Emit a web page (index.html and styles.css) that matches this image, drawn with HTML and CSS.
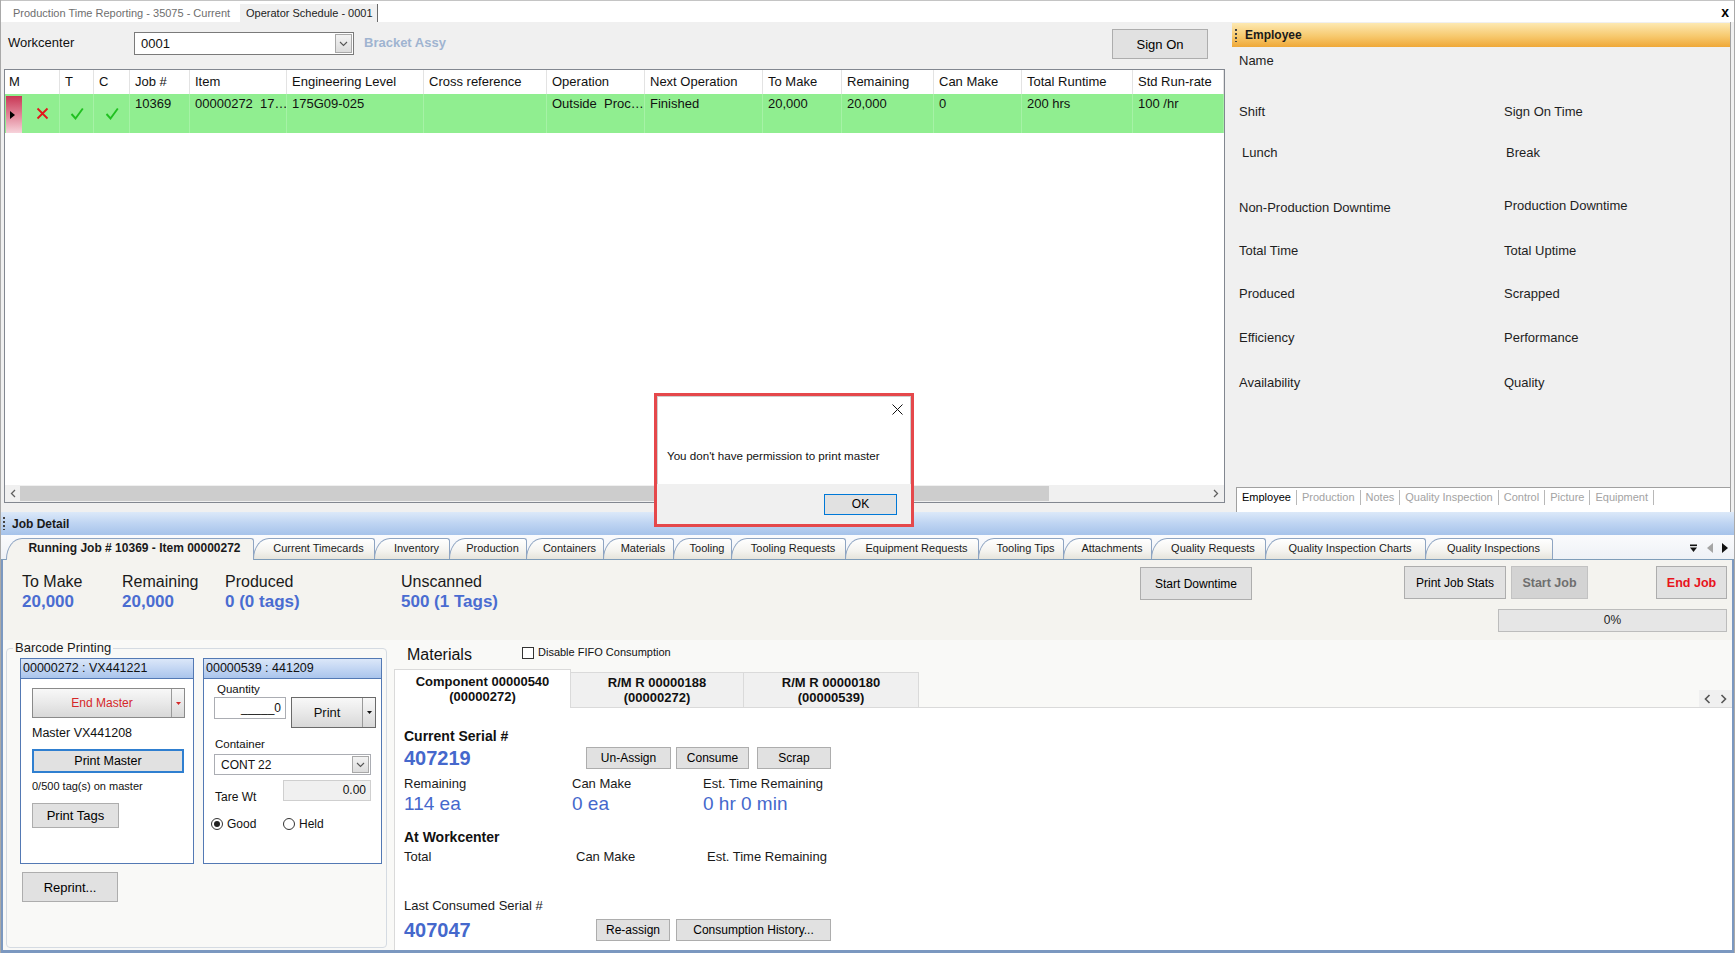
FILE: index.html
```html
<!DOCTYPE html>
<html lang="en">
<head>
<meta charset="utf-8">
<title>Operator Schedule - 0001</title>
<link rel="stylesheet" href="styles.css">
</head>
<body>
<div class="app">
  <div class="doc-tabs">
    <div class="doc-tab">Production Time Reporting - 35075 - Current</div>
    <div class="doc-tab doc-tab-active">Operator Schedule - 0001</div>
    <div class="doc-close">x</div>
  </div>

  <div class="main">
    <div class="left-pane">
      <div class="wc-row">
        <span class="wc-label">Workcenter</span>
        <div class="combo wc-combo">
          <span class="combo-text">0001</span>
          <span class="combo-btn"><svg width="9" height="6" viewBox="0 0 9 6"><path d="M1 1l3.5 3.5L8 1" fill="none" stroke="#555" stroke-width="1.1"/></svg></span>
        </div>
        <span class="wc-desc">Bracket Assy</span>
        <button class="btn btn-signon">Sign On</button>
      </div>
      <div class="grid">
        <div class="cols grid-head">
          <div class="gh">M</div><div class="gh">T</div><div class="gh">C</div><div class="gh">Job #</div><div class="gh">Item</div><div class="gh">Engineering Level</div><div class="gh">Cross reference</div><div class="gh">Operation</div><div class="gh">Next Operation</div><div class="gh">To Make</div><div class="gh">Remaining</div><div class="gh">Can Make</div><div class="gh">Total Runtime</div><div class="gh">Std Run-rate</div>
        </div>
        <div class="cols grid-row">
          <div class="gc gc-m">
            <span class="row-ind"><svg width="5" height="8" viewBox="0 0 5 8"><path d="M0 0L5 4L0 8z" fill="#000"/></svg></span>
            <svg class="ico-x" width="13" height="13" viewBox="0 0 13 13"><path d="M1.5 1.5l10 10M11.5 1.5l-10 10" stroke="#e3151a" stroke-width="1.8"/></svg>
          </div>
          <div class="gc gc-icon"><svg width="14" height="13" viewBox="0 0 14 13"><path d="M1.5 7l4 4.5L12.8 1.5" fill="none" stroke="#21c021" stroke-width="1.9"/></svg></div>
          <div class="gc gc-icon"><svg width="14" height="13" viewBox="0 0 14 13"><path d="M1.5 7l4 4.5L12.8 1.5" fill="none" stroke="#21c021" stroke-width="1.9"/></svg></div>
          <div class="gc">10369</div>
          <div class="gc">00000272&nbsp; 17…</div>
          <div class="gc">175G09-025</div>
          <div class="gc"></div>
          <div class="gc">Outside&nbsp; Proc…</div>
          <div class="gc">Finished</div>
          <div class="gc">20,000</div>
          <div class="gc">20,000</div>
          <div class="gc">0</div>
          <div class="gc">200 hrs</div>
          <div class="gc">100 /hr</div>
        </div>
        <div class="grid-fill"></div>
        <div class="hscroll">
          <div class="hs-arrow"><svg width="6" height="9" viewBox="0 0 6 9"><path d="M5 1L1.5 4.5L5 8" fill="none" stroke="#606060" stroke-width="1.3"/></svg></div>
          <div class="hs-track"><div class="hs-thumb"></div></div>
          <div class="hs-arrow hs-arrow-r"><svg width="6" height="9" viewBox="0 0 6 9"><path d="M1 1l3.5 3.5L1 8" fill="none" stroke="#606060" stroke-width="1.3"/></svg></div>
        </div>
      </div>
    </div>
    <div class="splitter"></div>
    <div class="emp-panel">
      <div class="emp-header"><span class="grip"></span><span>Employee</span></div>
      <div class="emp-body">
        <div class="ef">Name</div><div class="ef"></div>
        <div class="ef">Shift</div><div class="ef">Sign On Time</div>
        <div class="ef ef-in">Lunch</div><div class="ef ef-in2">Break</div>
        <div class="ef">Non-Production Downtime</div><div class="ef ef-up">Production Downtime</div>
        <div class="ef">Total Time</div><div class="ef">Total Uptime</div>
        <div class="ef">Produced</div><div class="ef">Scrapped</div>
        <div class="ef">Efficiency</div><div class="ef">Performance</div>
        <div class="ef">Availability</div><div class="ef">Quality</div>
      </div>
      <div class="emp-tabs">
        <span class="et et-active">Employee</span><span class="et">Production</span><span class="et">Notes</span><span class="et">Quality Inspection</span><span class="et">Control</span><span class="et">Picture</span><span class="et">Equipment</span>
      </div>
    </div>
  </div>

  <div class="jd-bar"><span class="grip"></span><span>Job Detail</span></div>
  <div class="jd-tabs">
    <div class="jd-tablist">
      <div class="jt jt-active">Running Job # 10369 - Item 00000272</div>
      <div class="jt">Current Timecards</div>
      <div class="jt">Inventory</div>
      <div class="jt">Production</div>
      <div class="jt">Containers</div>
      <div class="jt">Materials</div>
      <div class="jt">Tooling</div>
      <div class="jt">Tooling Requests</div>
      <div class="jt">Equipment Requests</div>
      <div class="jt">Tooling Tips</div>
      <div class="jt">Attachments</div>
      <div class="jt">Quality Requests</div>
      <div class="jt">Quality Inspection Charts</div>
      <div class="jt">Quality Inspections</div>
    </div>
    <div class="jt-ctrl">
      <svg width="9" height="9" viewBox="0 0 9 9"><rect x="1" y="0.5" width="7" height="1.6" fill="#111"/><path d="M1 3.5h7L4.5 8z" fill="#111"/></svg>
      <svg width="6" height="10" viewBox="0 0 6 10"><path d="M6 0v10L0 5z" fill="#a5a5a5"/></svg>
      <svg width="6" height="10" viewBox="0 0 6 10"><path d="M0 0v10L6 5z" fill="#111"/></svg>
    </div>
  </div>

  <div class="jd-page">
    <div class="stats-area">
      <div class="stats">
        <div class="stat"><div class="stat-l">To Make</div><div class="stat-v">20,000</div></div>
        <div class="stat"><div class="stat-l">Remaining</div><div class="stat-v">20,000</div></div>
        <div class="stat"><div class="stat-l">Produced</div><div class="stat-v">0 (0 tags)</div></div>
        <div class="stat"><div class="stat-l">Unscanned</div><div class="stat-v">500 (1 Tags)</div></div>
      </div>
      <div class="stats-mid"><button class="btn btn-big btn-downtime">Start Downtime</button></div>
      <div></div>
      <div class="stats-right">
        <div class="sr-buttons">
          <button class="btn btn-big btn-pjs">Print Job Stats</button>
          <button class="btn btn-big btn-start">Start Job</button>
          <button class="btn btn-big btn-end">End Job</button>
        </div>
        <div class="progress">0%</div>
      </div>
    </div>

    <div class="lower">
      <fieldset class="barcode">
        <legend>Barcode Printing</legend>
        <div class="bc-panels">
          <div class="bc-panel bc-p1">
            <div class="bc-head">00000272 : VX441221</div>
            <div class="bc-body">
              <div class="split split-end">
                <span class="split-main">End Master</span>
                <span class="split-drop"><svg width="5" height="3" viewBox="0 0 5 3"><path d="M0 0h5L2.5 3z" fill="#d52727"/></svg></span>
              </div>
              <div class="bc-master">Master VX441208</div>
              <button class="btn btn-pm">Print Master</button>
              <div class="bc-small">0/500 tag(s) on master</div>
              <button class="btn btn-pt">Print Tags</button>
            </div>
          </div>
          <div class="bc-panel bc-p2">
            <div class="bc-head">00000539 : 441209</div>
            <div class="bc-body bc-body2">
              <div class="f-label">Quantity</div>
              <div class="qty-row">
                <div class="inp inp-qty">_____0</div>
                <div class="split split-print">
                  <span class="split-main">Print</span>
                  <span class="split-drop"><svg width="5" height="3" viewBox="0 0 5 3"><path d="M0 0h5L2.5 3z" fill="#111"/></svg></span>
                </div>
              </div>
              <div class="f-label f-container">Container</div>
              <div class="combo cont-combo">
                <span class="combo-text">CONT 22</span>
                <span class="combo-btn"><svg width="9" height="6" viewBox="0 0 9 6"><path d="M1 1l3.5 3.5L8 1" fill="none" stroke="#555" stroke-width="1.1"/></svg></span>
              </div>
              <div class="tare-row">
                <span class="f-label f-tare">Tare Wt</span>
                <div class="inp inp-tare">0.00</div>
              </div>
              <div class="radio-row">
                <span class="ropt"><span class="radio radio-on"></span>Good</span>
                <span class="ropt"><span class="radio"></span>Held</span>
              </div>
            </div>
          </div>
        </div>
        <button class="btn btn-reprint">Reprint...</button>
      </fieldset>

      <div class="materials">
        <div class="mat-head">
          <span class="mat-title">Materials</span>
          <span class="chk"></span>
          <span class="chk-label">Disable FIFO Consumption</span>
        </div>
        <div class="mat-tabs">
          <div class="mt mt-active mt1">Component 00000540<br>(00000272)</div>
          <div class="mt mt2">R/M R 00000188<br>(00000272)</div>
          <div class="mt mt3">R/M R 00000180<br>(00000539)</div>
          <div class="mt-fill"></div>
          <div class="mt-arrows">
            <svg width="7" height="10" viewBox="0 0 7 10"><path d="M5.5 1L1.5 5l4 4" fill="none" stroke="#555" stroke-width="1.6"/></svg>
            <svg width="7" height="10" viewBox="0 0 7 10"><path d="M1.5 1l4 4-4 4" fill="none" stroke="#555" stroke-width="1.6"/></svg>
          </div>
        </div>
        <div class="mat-page">
          <div class="mp-title">Current Serial #</div>
          <div class="mp-row-btns">
            <div class="mp-serial">407219</div>
            <button class="btn btn-sm btn-unassign">Un-Assign</button>
            <button class="btn btn-sm btn-consume">Consume</button>
            <button class="btn btn-sm btn-scrap">Scrap</button>
          </div>
          <div class="mp-three">
            <div><div class="mp-l">Remaining</div><div class="mp-v">114 ea</div></div>
            <div><div class="mp-l">Can Make</div><div class="mp-v">0 ea</div></div>
            <div><div class="mp-l">Est. Time Remaining</div><div class="mp-v">0 hr 0 min</div></div>
          </div>
          <div class="mp-title mp-title2">At Workcenter</div>
          <div class="mp-three2">
            <div class="mp-l">Total</div><div class="mp-l">Can Make</div><div class="mp-l">Est. Time Remaining</div>
          </div>
          <div class="mp-l mp-last">Last Consumed Serial #</div>
          <div class="mp-row-btns mp-row-last">
            <div class="mp-serial mp-serial2">407047</div>
            <button class="btn btn-sm btn-reassign">Re-assign</button>
            <button class="btn btn-sm btn-history">Consumption History...</button>
          </div>
        </div>
      </div>
    </div>
  </div>
</div>

<div class="dialog">
  <div class="dlg-main">
    <div class="dlg-close"><svg width="11" height="11" viewBox="0 0 11 11"><path d="M0.5 0.5l10 10M10.5 0.5l-10 10" stroke="#111" stroke-width="1"/></svg></div>
    <div class="dlg-msg">You don't have permission to print master</div>
  </div>
  <div class="dlg-foot"><button class="dlg-ok">OK</button></div>
</div>
</body>
</html>
```

FILE: styles.css
```css
* { box-sizing: border-box; }
html, body { margin: 0; padding: 0; }
body {
  width: 1735px; height: 953px; overflow: hidden; position: relative;
  background: #f0f0f0; color: #111;
  font-family: "Liberation Sans", Arial, Helvetica, sans-serif; font-size: 13px;
}
button { font-family: inherit; margin: 0; padding: 0; }
svg { display: block; flex: none; }

.app {
  width: 1735px; height: 953px; display: flex; flex-direction: column;
  border-left: 1px solid #a9a9a9; border-right: 1px solid #a9a9a9;
}

/* document tabs */
.doc-tabs {
  height: 22px; flex: none; display: flex; align-items: flex-end;
  background: #fff; border-top: 1px solid #c4c4c4; font-size: 11px;
}
.doc-tab { width: 239px; height: 18px; line-height: 18px; padding-left: 12px; color: #6e6e6e; white-space: nowrap; }
.doc-tab-active { width: 138px; padding-left: 6px; background: #f0f0f0; color: #1c1c1c; border-right: 1px solid #6a6a6a; }
.doc-close { margin-left: auto; align-self: center; font-weight: bold; font-size: 14px; line-height: 14px; padding-right: 5px; color: #000; }

/* main top area */
.main { height: 490px; flex: none; display: flex; }
.left-pane { width: 1225px; padding: 0 1px 0 3px; display: flex; flex-direction: column; }
.wc-row { height: 47px; flex: none; display: flex; align-items: center; padding-left: 4px; }
.wc-label { width: 126px; margin-top: -7px; }
.combo { display: flex; align-items: center; background: #fff; border: 1px solid #7a7a7a; }
.combo-text { flex: 1; }
.combo-btn {
  width: 17px; height: 19px; margin-right: 1px; display: flex; align-items: center; justify-content: center;
  background: linear-gradient(#f3f3f3, #dcdcdc); border: 1px solid #a8a8a8;
}
.wc-combo { width: 220px; height: 23px; margin-top: -4px; padding-left: 6px; }
.wc-desc { margin-left: 10px; margin-top: -7px; font-weight: bold; color: #9fb4d0; }
.btn { background: #e1e1e1; border: 1px solid #adadad; color: #000; font-size: 12px; }
.btn-signon { margin-left: auto; margin-right: 17px; margin-top: -3px; width: 96px; height: 30px; font-size: 13px; }

.grid { height: 434px; flex: none; border: 1px solid #828790; background: #fff; display: flex; flex-direction: column; }
.cols { display: grid; grid-template-columns: 55px 34px 36px 60px 97px 137px 123px 98px 118px 79px 92px 88px 111px 1fr; }
.grid-head { height: 24px; flex: none; }
.gh { border-right: 1px solid #e3e3e3; line-height: 24px; padding-left: 5px; white-space: nowrap; overflow: hidden; }
.gh:first-child { padding-left: 4px; }
.grid-row { height: 39px; flex: none; background: #90ee90; }
.gc { border-right: 1px solid #a6f2a6; padding: 2px 0 0 5px; line-height: 15px; white-space: nowrap; overflow: hidden; }
.gc-m { display: flex; align-items: center; padding: 0; }
.row-ind {
  width: 16px; align-self: stretch; margin: 2px 0 0 1px; padding-left: 4px;
  display: flex; align-items: center;
  background: linear-gradient(#c93755, #e38a9d 55%, #f7d3db);
}
.ico-x { margin-left: 14px; }
.gc-icon { display: flex; align-items: center; justify-content: center; padding: 0; }
.grid-fill { flex: 1; }
.hscroll { height: 17px; flex: none; display: flex; background: #f0f0f0; }
.hs-arrow { width: 15px; display: flex; align-items: center; justify-content: center; }
.hs-arrow-r { width: 17px; }
.hs-track { flex: 1; display: flex; padding: 1px 0; }
.hs-thumb { width: 1029px; background: #cdcdcd; }

.splitter { width: 6px; flex: none; }
.emp-panel {
  width: 499px; flex: none; margin-right: 3px; padding-top: 1px;
  border-right: 1px solid #a0a0a0; display: flex; flex-direction: column;
}
.grip {
  width: 2px; height: 13px; flex: none;
  background: repeating-linear-gradient(to bottom, #444 0 2px, transparent 2px 4px);
}
.emp-header {
  height: 24px; flex: none; display: flex; align-items: center; gap: 8px; padding-left: 3px;
  background: linear-gradient(#fde9b2, #f7c96e 55%, #efa838);
  font-weight: bold; font-size: 12px; color: #1a1a1a;
}
.emp-body {
  flex: 1; display: grid; grid-template-columns: 265px 1fr;
  grid-template-rows: 51px 41px 55px 43px 43px 44px 45px 15px; align-content: start;
  padding: 6px 0 0 7px; line-height: 15px; color: #1e1e1e;
}
.ef { white-space: nowrap; }
.ef-in { padding-left: 3px; }
.ef-in2 { padding-left: 2px; }
.ef-up { margin-top: -2px; }
.emp-tabs {
  height: 25px; flex: none; margin-left: 4px; padding-top: 2px;
  background: #fff; border-top: 1px solid #a0a0a0; border-left: 1px solid #a0a0a0;
  display: flex; align-items: flex-start; font-size: 11px;
}
.et { padding: 0 5px; line-height: 15px; border-right: 1px solid #b8b8b8; color: #a3a3a3; white-space: nowrap; }
.et-active { color: #000; }

/* job detail */
.jd-bar {
  height: 23px; flex: none; display: flex; align-items: center; gap: 7px; padding-left: 2px;
  background: linear-gradient(#dce9f9, #bed4f2 50%, #a6c3ea);
  font-weight: bold; font-size: 12px; color: #1a1a1a;
}
.jd-tabs {
  height: 25px; flex: none; display: flex; align-items: flex-end; padding-left: 5px;
  background: linear-gradient(#fafbfd, #eef1f6); border-bottom: 1px solid #7f9db9;
}
.jd-tablist {
  display: grid; align-items: end;
  grid-template-columns: 247px 121px 75px 77px 77px 70px 58px 114px 133px 85px 88px 114px 160px 127px;
}
.jt {
  height: 21px; border: 1px solid #8ea4c2; border-bottom: none;
  border-top-left-radius: 16px 21px; border-top-right-radius: 3px;
  background: linear-gradient(#ffffff, #f4f3ef 60%, #e6e4dc);
  font-size: 11px; line-height: 19px; text-align: center; padding-left: 9px;
  white-space: nowrap; color: #1a1a1a; margin-right: -1px;
}
.jt-active { height: 22px; margin-bottom: -1px; background: #f4f3ef; font-weight: bold; font-size: 12px; }
.jt-ctrl { margin-left: auto; height: 22px; display: flex; align-items: center; gap: 9px; padding-right: 6px; }

.jd-page {
  flex: 1; display: flex; flex-direction: column;
  border: 2px solid #7b98c0; border-top: none; border-bottom-width: 3px;
  background: #f9f9f7;
}
.stats-area {
  height: 80px; flex: none; display: grid; grid-template-columns: 1118px 112px 152px 323px;
  padding-left: 19px; background: #f4f3ef;
}
.stats { display: grid; grid-template-columns: 100px 103px 176px auto; align-content: start; padding-top: 13px; }
.stat-l { font-size: 16px; line-height: 18px; color: #1a1a1a; white-space: nowrap; }
.stat-v { font-size: 17px; line-height: 20px; margin-top: 1px; font-weight: bold; color: #4a6cd1; white-space: nowrap; }
.btn-big { height: 33px; }
.btn-downtime { width: 112px; margin-top: 7px; }
.stats-right { display: flex; flex-direction: column; align-items: flex-end; padding-top: 6px; }
.sr-buttons { display: flex; width: 100%; }
.btn-pjs { width: 102px; }
.btn-start { width: 77px; margin-left: 5px; background: #d3d3d3; border-color: #c2c2c2; color: #6f6f6f; font-weight: bold; font-size: 12.5px; }
.btn-end { width: 71px; margin-left: auto; color: #e8141c; font-weight: bold; font-size: 12.5px; }
.progress {
  width: 229px; height: 23px; margin-top: 10px; border: 1px solid #bcbcbc; background: #e6e6e6;
  font-size: 12px; line-height: 21px; text-align: center; color: #222;
}

.lower { flex: 1; display: flex; padding-left: 3px; background: #f9f9f7; }
.barcode {
  width: 381px; height: 308px; flex: none; margin: 0; padding: 2px 4px 0 13px;
  border: 1px solid #d5dbe2; border-radius: 4px;
}
.barcode legend { margin-left: -7px; padding: 0 2px; font-size: 13px; line-height: 16px; color: #1a1a1a; }
.bc-panels { display: flex; gap: 9px; }
.bc-panel { height: 206px; border: 1px solid #5379b4; background: #fff; display: flex; flex-direction: column; }
.bc-p1 { width: 174px; }
.bc-p2 { width: 179px; }
.bc-head {
  height: 20px; flex: none; padding-left: 2px; border-bottom: 1px solid #5379b4;
  background: linear-gradient(#dbe7f9, #c3d6f3 50%, #aac5ec);
  font-size: 12.5px; line-height: 19px; color: #111; white-space: nowrap;
}
.bc-body { flex: 1; padding: 9px 0 0 11px; display: flex; flex-direction: column; align-items: flex-start; }
.split { display: flex; border: 1px solid #8a8a8a; background: linear-gradient(#f8f8f8, #e9e9e9 50%, #d8d8d8); }
.split-main { flex: 1; display: flex; align-items: center; justify-content: center; border-right: 1px solid #9a9a9a; }
.split-drop { width: 12px; display: flex; align-items: center; justify-content: center; }
.split-end { width: 153px; height: 30px; }
.split-end .split-main { color: #d52727; font-size: 12px; }
.bc-master { margin-top: 7px; font-size: 12.5px; line-height: 16px; }
.btn-pm { width: 152px; height: 24px; margin-top: 8px; border: 2px solid #2f7fd0; font-size: 12.5px; }
.bc-small { margin-top: 7px; font-size: 11px; line-height: 13px; }
.btn-pt { width: 87px; height: 25px; margin-top: 10px; font-size: 13px; }

.bc-body2 { padding: 3px 0 0 10px; }
.f-label { font-size: 11.5px; line-height: 14px; padding-left: 3px; }
.qty-row { display: flex; gap: 5px; margin-top: 1px; align-items: flex-start; }
.inp { background: #fff; border: 1px solid #abadb3; text-align: right; padding-right: 4px; }
.inp-qty { width: 72px; height: 22px; font-size: 12px; line-height: 20px; }
.split-print { width: 85px; height: 31px; border-color: #6a6a6a; }
.split-print .split-main { font-size: 13px; }
.f-container { margin-top: 9px; padding-left: 1px; }
.cont-combo { width: 157px; height: 21px; margin-top: 3px; padding-left: 6px; font-size: 12px; border-color: #abadb3; }
.cont-combo .combo-btn { height: 17px; }
.tare-row { display: flex; height: 21px; margin-top: 5px; align-items: flex-end; }
.f-tare { width: 69px; padding-left: 1px; margin-bottom: -3px; font-size: 12px; }
.inp-tare { width: 88px; height: 21px; background: #f0f0f0; border-color: #cfcfcf; font-size: 12px; line-height: 19px; }
.radio-row { display: flex; margin-top: 16px; margin-left: -3px; font-size: 12px; line-height: 14px; }
.ropt { display: flex; align-items: center; gap: 4px; width: 72px; }
.radio {
  width: 12px; height: 12px; border: 1px solid #333; border-radius: 50%; background: #fff;
  display: flex; align-items: center; justify-content: center;
}
.radio-on::after { content: ""; width: 6px; height: 6px; border-radius: 50%; background: #222; }
.btn-reprint { display: block; width: 96px; height: 30px; margin: 8px 0 0 2px; font-size: 13px; }

.materials { flex: 1; margin-left: 7px; display: flex; flex-direction: column; }
.mat-head { height: 29px; flex: none; display: flex; align-items: center; padding-left: 13px; }
.mat-title { width: 115px; font-size: 16px; }
.chk { width: 12px; height: 12px; border: 1px solid #333; background: #fff; margin-top: -4px; }
.chk-label { margin-left: 4px; margin-top: -5px; font-size: 11px; }
.mat-tabs { height: 39px; flex: none; display: flex; align-items: flex-end; border-bottom: 1px solid #dadada; }
.mt {
  height: 35px; padding-top: 2px; background: #f0f0f0;
  border: 1px solid #dadada; border-bottom: none; border-left: none;
  font-weight: bold; font-size: 13px; line-height: 15px; text-align: center; color: #111; white-space: nowrap;
}
.mt-active { height: 39px; margin-bottom: -1px; padding-top: 4px; background: #fff; border-left: 1px solid #dadada; }
.mt1 { width: 177px; }
.mt2 { width: 173px; }
.mt3 { width: 175px; }
.mt-fill { flex: 1; }
.mt-arrows {
  width: 33px; height: 17px; display: flex; align-items: center; justify-content: space-around;
  background: #f0f0f0; margin-bottom: 0;
}
.mat-page { flex: 1; background: #fff; border-left: 1px solid #dadada; padding: 20px 0 0 9px; }
.mp-title { font-weight: bold; font-size: 14px; line-height: 16px; }
.mp-row-btns { display: flex; align-items: center; height: 22px; margin-top: 3px; }
.mp-serial { width: 182px; font-weight: bold; font-size: 20px; line-height: 22px; color: #4568cc; }
.btn-sm { height: 22px; font-size: 12px; }
.btn-unassign { width: 85px; }
.btn-consume { width: 73px; margin-left: 5px; }
.btn-scrap { width: 74px; margin-left: 8px; }
.mp-three { display: grid; grid-template-columns: 168px 131px auto; margin-top: 7px; }
.mp-l { font-size: 13px; line-height: 15px; color: #1a1a1a; white-space: nowrap; }
.mp-v { font-size: 19px; line-height: 22px; margin-top: 2px; color: #4568cc; white-space: nowrap; }
.mp-title2 { margin-top: 14px; }
.mp-three2 { display: grid; grid-template-columns: 172px 131px auto; margin-top: 4px; }
.mp-last { margin-top: 34px; }
.mp-row-last { height: 24px; margin-top: 5px; }
.mp-serial2 { width: 192px; }
.btn-reassign { width: 74px; }
.btn-history { width: 155px; margin-left: 6px; }

/* dialog */
.dialog {
  position: absolute; left: 654px; top: 393px; width: 260px; height: 134px;
  border: 3px solid #e5484b; background: #fff; display: flex; flex-direction: column;
  box-shadow: inset 0 0 0 1px #cfcfcf;
}
.dlg-main { flex: 1; display: flex; flex-direction: column; }
.dlg-close { display: flex; justify-content: flex-end; padding: 8px 8px 0 0; }
.dlg-msg { margin-top: 34px; padding-left: 10px; font-size: 11.6px; line-height: 14px; color: #111; white-space: nowrap; }
.dlg-foot { height: 40px; flex: none; background: #f0f0f0; display: flex; align-items: center; justify-content: flex-end; padding-right: 14px; }
.dlg-ok { width: 73px; height: 21px; border: 1px solid #0078d7; background: #e1e1e1; font-size: 12px; color: #000; }
```
